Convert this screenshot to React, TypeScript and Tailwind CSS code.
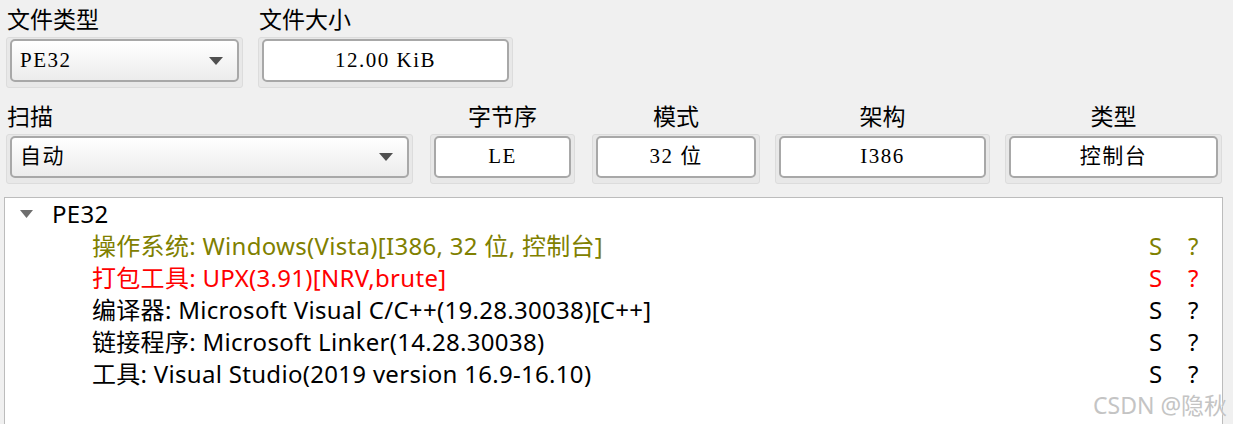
import React from 'react';

const cjk = "font-['Noto_Sans_CJK_SC',sans-serif]";
const boxFont = "font-['Liberation_Serif','Noto_Sans_CJK_SC',serif]";
const treeFont = "font-['Noto_Sans','Noto_Sans_CJK_SC',sans-serif]";

function Frame({ width, children }: { width: string; children: React.ReactNode }) {
  return (
    <div className={`${width} rounded-[3px] border border-[#dcdcdc] bg-[#e8e8e8] px-[3px] pt-px pb-[5px]`}>
      {children}
    </div>
  );
}

function Caret() {
  return (
    <svg width="14" height="8" viewBox="0 0 14 8" className="shrink-0">
      <path d="M0 0 H14 L7 8 Z" fill="#505050" />
    </svg>
  );
}

function Combo({ width, height, value }: { width: string; height: string; value: string }) {
  return (
    <Frame width={width}>
      <div
        className={`${height} flex items-center justify-between rounded-[5px] border-2 border-[#a8a8a8] bg-gradient-to-b from-white to-[#ececec] pl-[8px] pr-[14px]`}
      >
        <span className={`${boxFont} text-[21px] tracking-[1.5px] text-black`}>{value}</span>
        <Caret />
      </div>
    </Frame>
  );
}

function Field({ width, height, value }: { width: string; height: string; value: string }) {
  return (
    <Frame width={width}>
      <div className={`${height} flex items-center justify-center rounded-[5px] border-2 border-[#a8a8a8] bg-white`}>
        <span className={`${boxFont} whitespace-pre text-[21px] tracking-[1.5px] text-black`}>{value}</span>
      </div>
    </Frame>
  );
}

function Labeled({
  label,
  center,
  children,
}: {
  label: string;
  center?: boolean;
  children: React.ReactNode;
}) {
  return (
    <div className="flex flex-col">
      <div className={`${cjk} h-[31px] text-[23px] leading-[24px] text-black ${center ? 'text-center' : 'pl-px'}`}>
        {label}
      </div>
      {children}
    </div>
  );
}

const rows = [
  { text: '操作系统: Windows(Vista)[I386, 32 位, 控制台]', color: 'text-[#808000]' },
  { text: '打包工具: UPX(3.91)[NRV,brute]', color: 'text-[#ff0000]' },
  { text: '编译器: Microsoft Visual C/C++(19.28.30038)[C++]', color: 'text-black' },
  { text: '链接程序: Microsoft Linker(14.28.30038)', color: 'text-black' },
  { text: '工具: Visual Studio(2019 version 16.9-16.10)', color: 'text-black' },
];

export default function App() {
  return (
    <div className="relative h-[424px] w-[1233px] overflow-hidden bg-[#f0f0f0]">
      <div className="flex gap-[15px] pl-[6px] pt-[6px]">
        <Labeled label="文件类型">
          <Combo width="w-[237px]" height="h-[43px]" value="PE32" />
        </Labeled>
        <Labeled label="文件大小">
          <Field width="w-[255px]" height="h-[43px]" value="12.00 KiB" />
        </Labeled>
      </div>

      <div className="mt-[15px] flex pl-[6px]">
        <Labeled label="扫描">
          <Combo width="w-[407px]" height="h-[42px]" value="自动" />
        </Labeled>
        <div className="ml-[17px]">
          <Labeled label="字节序" center>
            <Field width="w-[145px]" height="h-[42px]" value="LE" />
          </Labeled>
        </div>
        <div className="ml-[17px]">
          <Labeled label="模式" center>
            <Field width="w-[168px]" height="h-[42px]" value="32 位" />
          </Labeled>
        </div>
        <div className="ml-[15px]">
          <Labeled label="架构" center>
            <Field width="w-[215px]" height="h-[42px]" value="I386" />
          </Labeled>
        </div>
        <div className="ml-[15px]">
          <Labeled label="类型" center>
            <Field width="w-[217px]" height="h-[42px]" value="控制台" />
          </Labeled>
        </div>
      </div>

      <div className="ml-[4px] mt-[13px] h-[260px] w-[1219px] border border-[#bcbcbc] bg-white">
        <div className={`${treeFont} text-[24px] leading-[32px] tracking-[0.3px]`}>
          <div className="flex h-[32px] items-center text-black">
            <svg width="13" height="8" viewBox="0 0 13 8" className="ml-[15px] mr-[19px]">
              <path d="M0 0 H13 L6.5 8 Z" fill="#6e6e6e" />
            </svg>
            <span>PE32</span>
          </div>
          {rows.map((r) => (
            <div key={r.text} className={`flex h-[32px] items-center pl-[87px] ${r.color}`}>
              <span className="flex-1">{r.text}</span>
              <span className="w-[39px]">S</span>
              <span className="w-[34px]">?</span>
            </div>
          ))}
        </div>
      </div>

      <div
        className={`${treeFont} pointer-events-none absolute left-[1093px] top-[388px] text-[23px] text-[#c4c4c4] [text-shadow:0_0_1px_#ffffff]`}
      >
        CSDN @隐秋
      </div>
    </div>
  );
}
